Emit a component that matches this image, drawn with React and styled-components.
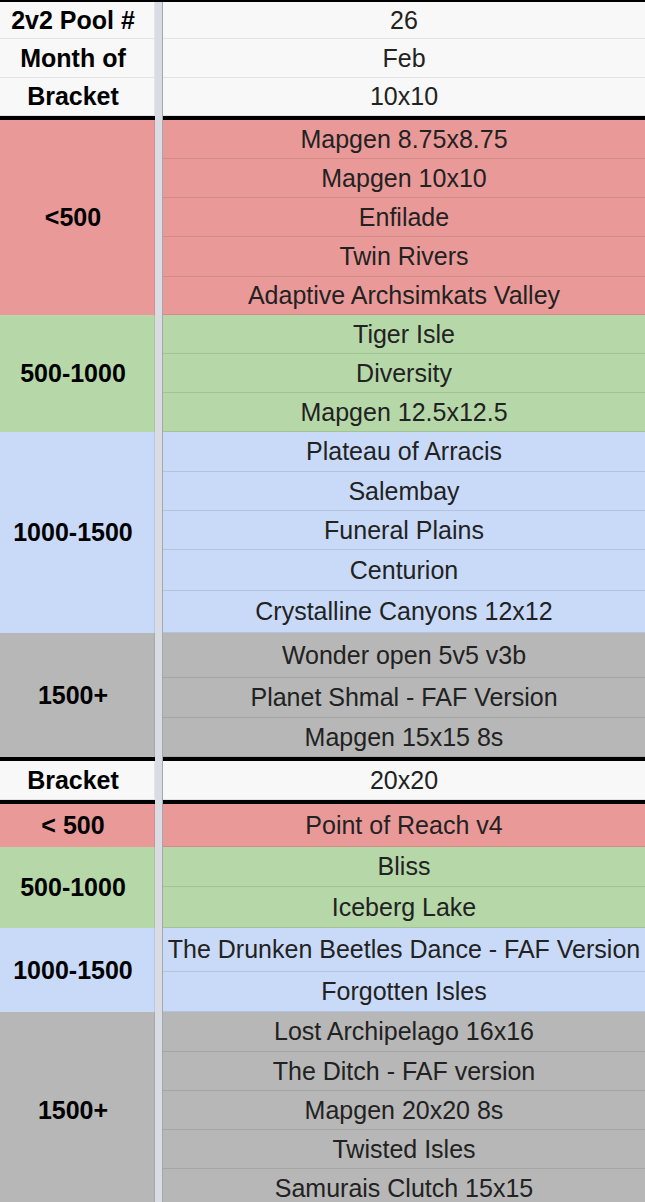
import React from "react";
import styled, { createGlobalStyle } from "styled-components";

const tones = {
  plain: { bg: "#f8f8f8", line: "#e2e2e2" },
  red: { bg: "#ea9999", line: "#d58a8a" },
  green: { bg: "#b6d7a8", line: "#a3c296" },
  blue: { bg: "#c9daf8", line: "#b2c3e0" },
  grey: { bg: "#b7b7b7", line: "#a5a5a5" },
};

const header = [
  { label: "2v2 Pool #", value: "26", h: 37 },
  { label: "Month of", value: "Feb", h: 39 },
  { label: "Bracket", value: "10x10", h: 38 },
];

const pool10 = [
  {
    label: "<500",
    tone: "red",
    rows: [
      ["Mapgen 8.75x8.75", 39],
      ["Mapgen 10x10", 39],
      ["Enfilade", 39],
      ["Twin Rivers", 40],
      ["Adaptive Archsimkats Valley", 38],
    ],
  },
  {
    label: "500-1000",
    tone: "green",
    rows: [
      ["Tiger Isle", 39],
      ["Diversity", 39],
      ["Mapgen 12.5x12.5", 39],
    ],
  },
  {
    label: "1000-1500",
    tone: "blue",
    rows: [
      ["Plateau of Arracis", 40],
      ["Salembay", 39],
      ["Funeral Plains", 39],
      ["Centurion", 41],
      ["Crystalline Canyons 12x12", 42],
    ],
  },
  {
    label: "1500+",
    tone: "grey",
    rows: [
      ["Wonder open 5v5 v3b", 45],
      ["Planet Shmal - FAF Version", 40],
      ["Mapgen 15x15 8s", 39],
    ],
  },
];

const pool20 = [
  { label: "< 500", tone: "red", rows: [["Point of Reach v4", 43]] },
  {
    label: "500-1000",
    tone: "green",
    rows: [
      ["Bliss", 40],
      ["Iceberg Lake", 41],
    ],
  },
  {
    label: "1000-1500",
    tone: "blue",
    rows: [
      ["The Drunken Beetles Dance - FAF Version", 44],
      ["Forgotten Isles", 40],
    ],
  },
  {
    label: "1500+",
    tone: "grey",
    rows: [
      ["Lost Archipelago 16x16", 40],
      ["The Ditch - FAF version", 39],
      ["Mapgen 20x20 8s", 39],
      ["Twisted Isles", 39],
      ["Samurais Clutch 15x15", 40],
    ],
  },
];

const GlobalStyle = createGlobalStyle`
  html, body {
    margin: 0;
    padding: 0;
    background: #ffffff;
  }
  body {
    font-family: "Liberation Sans", Arial, sans-serif;
    overflow: hidden;
  }
`;

const Sheet = styled.div`
  width: 645px;
  height: 1202px;
  overflow: hidden;
  border-top: 2px solid #000;
  box-sizing: border-box;
`;

const Row = styled.div`
  display: flex;
  align-items: stretch;
`;

const Label = styled.div`
  width: 155px;
  flex: none;
  box-sizing: border-box;
  padding-right: 8px;
  display: flex;
  align-items: center;
  justify-content: center;
  font-weight: bold;
  font-size: 25px;
  color: #000;
  background: ${(p) => tones[p.$tone].bg};
  border-right: 1px solid rgba(0, 0, 0, 0.08);
  border-bottom: ${(p) => (p.$line ? `1px solid ${tones[p.$tone].line}` : "none")};
`;

const Freeze = styled.div`
  width: 7px;
  flex: none;
  background: #d9dce3;
  border-right: 1px solid #a4a7ad;
`;

const Values = styled.div`
  flex: 1;
  display: flex;
  flex-direction: column;
`;

const Cell = styled.div`
  height: ${(p) => p.$h}px;
  box-sizing: border-box;
  display: flex;
  align-items: center;
  justify-content: center;
  white-space: nowrap;
  font-size: 25px;
  color: #222;
  background: ${(p) => tones[p.$tone].bg};
  border-bottom: 1px solid ${(p) => tones[p.$tone].line};
`;

const Rule = styled.div`
  display: flex;
  height: 4px;
`;

const RuleBar = styled.div`
  flex: ${(p) => (p.$left ? "none" : 1)};
  width: ${(p) => (p.$left ? "155px" : "auto")};
  background: #000;
`;

const Divider = () => (
  <Rule>
    <RuleBar $left />
    <Freeze />
    <RuleBar />
  </Rule>
);

const Group = ({ label, tone, rows }) => (
  <Row>
    <Label $tone={tone}>{label}</Label>
    <Freeze />
    <Values>
      {rows.map(([name, h], i) => (
        <Cell key={i} $tone={tone} $h={h}>
          {name}
        </Cell>
      ))}
    </Values>
  </Row>
);

const Single = ({ label, value, h }) => (
  <Row>
    <Label $tone="plain" $line>
      {label}
    </Label>
    <Freeze />
    <Values>
      <Cell $tone="plain" $h={h}>
        {value}
      </Cell>
    </Values>
  </Row>
);

export default function App() {
  return (
    <>
      <GlobalStyle />
      <Sheet>
        {header.map((r) => (
          <Single key={r.label} {...r} />
        ))}
        <Divider />
        {pool10.map((g) => (
          <Group key={g.label} {...g} />
        ))}
        <Divider />
        <Single label="Bracket" value="20x20" h={39} />
        <Divider />
        {pool20.map((g) => (
          <Group key={g.label} {...g} />
        ))}
      </Sheet>
    </>
  );
}
